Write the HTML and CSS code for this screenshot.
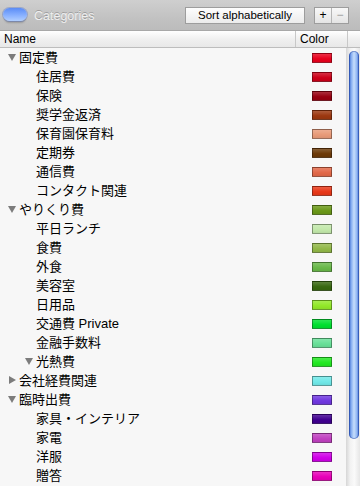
FILE: index.html
```html
<!doctype html>
<html lang="ja">
<head>
    <meta charset="UTF-8">
    <title>Categories</title>
    <link rel="stylesheet" href="styles.css">
</head>
<body>

<div class="window">
    <div class="toolbar">
        <div class="pill"></div>
        <div class="title">Categories</div>
        <div class="spacer"></div>
        <div class="btn sort">Sort alphabetically</div>
        <div class="segment">
            <div class="seg">+</div>
            <div class="seg off">&minus;</div>
        </div>
    </div>

    <div class="table_head">
        <div class="th th_name">Name</div>
        <div class="th th_color">Color</div>
        <div class="th th_corner"></div>
    </div>

    <div class="table_body">
        <div class="rows">
            <!-- 固定費 -->
            <div class="row l0"><span class="disc open"></span><span class="label">固定費</span><span class="cell_color"><i class="swatch" style="background-color:#e8001c"></i></span></div>
            <div class="row l1"><span class="disc"></span><span class="label">住居費</span><span class="cell_color"><i class="swatch" style="background-color:#cc0018"></i></span></div>
            <div class="row l1"><span class="disc"></span><span class="label">保険</span><span class="cell_color"><i class="swatch" style="background-color:#980010"></i></span></div>
            <div class="row l1"><span class="disc"></span><span class="label">奨学金返済</span><span class="cell_color"><i class="swatch" style="background-color:#9c3810"></i></span></div>
            <div class="row l1"><span class="disc"></span><span class="label">保育園保育料</span><span class="cell_color"><i class="swatch" style="background-color:#e89a78"></i></span></div>
            <div class="row l1"><span class="disc"></span><span class="label">定期券</span><span class="cell_color"><i class="swatch" style="background-color:#6c3a08"></i></span></div>
            <div class="row l1"><span class="disc"></span><span class="label">通信費</span><span class="cell_color"><i class="swatch" style="background-color:#e26848"></i></span></div>
            <div class="row l1"><span class="disc"></span><span class="label">コンタクト関連</span><span class="cell_color"><i class="swatch" style="background-color:#e83818"></i></span></div>
            <!-- やりくり費 -->
            <div class="row l0"><span class="disc open"></span><span class="label">やりくり費</span><span class="cell_color"><i class="swatch" style="background-color:#6a9818"></i></span></div>
            <div class="row l1"><span class="disc"></span><span class="label">平日ランチ</span><span class="cell_color"><i class="swatch" style="background-color:#c2e8aa"></i></span></div>
            <div class="row l1"><span class="disc"></span><span class="label">食費</span><span class="cell_color"><i class="swatch" style="background-color:#92b848"></i></span></div>
            <div class="row l1"><span class="disc"></span><span class="label">外食</span><span class="cell_color"><i class="swatch" style="background-color:#68b848"></i></span></div>
            <div class="row l1"><span class="disc"></span><span class="label">美容室</span><span class="cell_color"><i class="swatch" style="background-color:#386810"></i></span></div>
            <div class="row l1"><span class="disc"></span><span class="label">日用品</span><span class="cell_color"><i class="swatch" style="background-color:#92e828"></i></span></div>
            <div class="row l1"><span class="disc"></span><span class="label">交通費 Private</span><span class="cell_color"><i class="swatch" style="background-color:#00e030"></i></span></div>
            <div class="row l1"><span class="disc"></span><span class="label">金融手数料</span><span class="cell_color"><i class="swatch" style="background-color:#68e098"></i></span></div>
            <div class="row l1"><span class="disc open"></span><span class="label">光熱費</span><span class="cell_color"><i class="swatch" style="background-color:#22e822"></i></span></div>
            <!-- 会社経費関連 -->
            <div class="row l0"><span class="disc closed"></span><span class="label">会社経費関連</span><span class="cell_color"><i class="swatch" style="background-color:#70e8e8"></i></span></div>
            <!-- 臨時出費 -->
            <div class="row l0"><span class="disc open"></span><span class="label">臨時出費</span><span class="cell_color"><i class="swatch" style="background-color:#7038e0"></i></span></div>
            <div class="row l1"><span class="disc"></span><span class="label">家具・インテリア</span><span class="cell_color"><i class="swatch" style="background-color:#400090"></i></span></div>
            <div class="row l1"><span class="disc"></span><span class="label">家電</span><span class="cell_color"><i class="swatch" style="background-color:#c040c0"></i></span></div>
            <div class="row l1"><span class="disc"></span><span class="label">洋服</span><span class="cell_color"><i class="swatch" style="background-color:#d000e8"></i></span></div>
            <div class="row l1"><span class="disc"></span><span class="label">贈答</span><span class="cell_color"><i class="swatch" style="background-color:#e800b8"></i></span></div>
        </div>
        <div class="scrollbar">
            <div class="thumb"></div>
        </div>
    </div>
</div>

</body>
</html>
```

FILE: styles.css
```css
body {
    margin: 0;
    font-family: "Liberation Sans", "Noto Sans CJK JP", sans-serif;
    color: #000;
}

.window {
    width: 360px;
    height: 486px;
    overflow: hidden;
    display: flex;
    flex-direction: column;
    background: #f7f7f7;
}

/* toolbar */
.toolbar {
    height: 31px;
    box-sizing: border-box;
    display: flex;
    align-items: center;
    padding: 0 11px 0 3px;
    background: linear-gradient(#cfcfcf, #c2c2c2 60%, #bcbcbc);
    border-bottom: 1px solid #a8a8a8;
}
.pill {
    width: 24px;
    height: 13px;
    margin-top: -1px;
    border-radius: 7px;
    background: linear-gradient(#5a8cf6, #88b0ff 55%, #b0ceff);
    box-shadow: 0 0 0 1px rgba(50, 90, 200, 0.3), 0 3px 2px -1px rgba(0, 0, 0, 0.2);
}
.title {
    margin-left: 7px;
    margin-top: 2px;
    font-size: 12.5px;
    color: #efefef;
    text-shadow: 0 -1px 0 rgba(0, 0, 0, 0.22);
}
.spacer {
    flex: 1;
}
.btn {
    height: 17px;
    box-sizing: border-box;
    border: 1px solid #9d9d9d;
    background: linear-gradient(#fdfdfd, #ececec);
    font-size: 11.5px;
    line-height: 15px;
    text-align: center;
}
.sort {
    width: 120px;
}
.segment {
    display: flex;
    margin-left: 9px;
    border: 1px solid #9d9d9d;
    height: 17px;
    box-sizing: border-box;
    background: linear-gradient(#f8f8f8, #e4e4e4);
}
.seg {
    width: 16px;
    text-align: center;
    font-size: 12px;
    line-height: 15px;
}
.seg + .seg {
    border-left: 1px solid #b5b5b5;
}
.seg.off {
    color: #9a9a9a;
}

/* header */
.table_head {
    height: 17px;
    box-sizing: border-box;
    display: flex;
    background: linear-gradient(#ffffff, #f0f0f0 50%, #e8e8e8);
    border-bottom: 1px solid #bdbdbd;
    font-size: 12px;
    line-height: 16px;
}
.th {
    box-sizing: border-box;
    border-right: 1px solid #c8c8c8;
}
.th_name {
    width: 296px;
    padding-left: 4px;
}
.th_color {
    width: 52px;
    padding-left: 4px;
}
.th_corner {
    flex: 1;
    border-right: 0;
}

/* body */
.table_body {
    flex: 1;
    display: flex;
    min-height: 0;
}
.rows {
    flex: 1;
}
.row {
    height: 19px;
    display: flex;
    align-items: center;
    font-size: 13px;
}
.row.l0 {
    padding-left: 2px;
}
.row.l1 {
    padding-left: 19px;
}
.disc {
    width: 17px;
    height: 19px;
    flex: none;
    position: relative;
}
.disc.open::before {
    content: '';
    position: absolute;
    left: 6px;
    top: 6px;
    border-left: 4.5px solid transparent;
    border-right: 4.5px solid transparent;
    border-top: 7px solid #7c7c7c;
}
.disc.closed::before {
    content: '';
    position: absolute;
    left: 7px;
    top: 5px;
    border-top: 4.5px solid transparent;
    border-bottom: 4.5px solid transparent;
    border-left: 7px solid #7c7c7c;
}
.label {
    flex: 1;
    white-space: nowrap;
    padding-bottom: 2px;
}
.cell_color {
    width: 50px;
    flex: none;
    padding-left: 16px;
    box-sizing: border-box;
    display: flex;
    align-items: center;
}
.swatch {
    display: block;
    width: 20px;
    height: 10px;
    box-sizing: border-box;
    border: 1px solid rgba(0, 0, 0, 0.35);
    background-image: linear-gradient(rgba(255, 255, 255, 0.18), rgba(255, 255, 255, 0) 60%, rgba(0, 0, 0, 0.06));
}

/* scrollbar */
.scrollbar {
    width: 14px;
    flex: none;
    padding: 3px 1px 0 3px;
    box-sizing: border-box;
    background: linear-gradient(to right, #d6d6d6, #f2f2f2 30%, #fafafa 60%, #e6e6e6);
}
.thumb {
    height: 388px;
    border-radius: 5px;
    background: linear-gradient(to right, #2f5fc8, #7fa8ee 20%, #c6defc 50%, #8fb4f2 80%, #3566cc);
    box-shadow: inset 0 0 0 1px rgba(30, 60, 150, 0.45);
}
```
